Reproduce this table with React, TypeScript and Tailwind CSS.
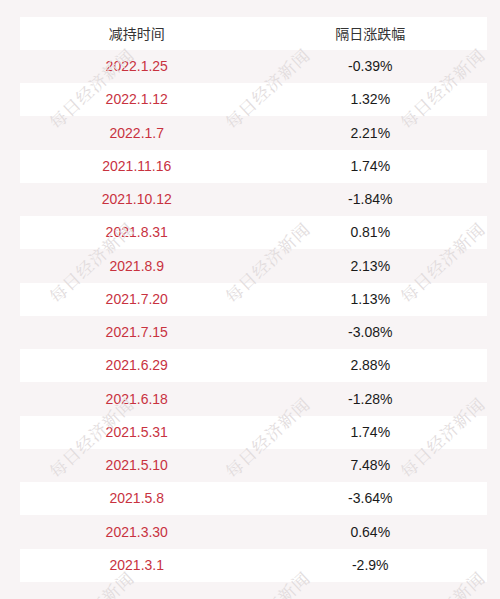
import React from "react";

const rows: [string, string][] = [
  ["2022.1.25", "-0.39%"],
  ["2022.1.12", "1.32%"],
  ["2022.1.7", "2.21%"],
  ["2021.11.16", "1.74%"],
  ["2021.10.12", "-1.84%"],
  ["2021.8.31", "0.81%"],
  ["2021.8.9", "2.13%"],
  ["2021.7.20", "1.13%"],
  ["2021.7.15", "-3.08%"],
  ["2021.6.29", "2.88%"],
  ["2021.6.18", "-1.28%"],
  ["2021.5.31", "1.74%"],
  ["2021.5.10", "7.48%"],
  ["2021.5.8", "-3.64%"],
  ["2021.3.30", "0.64%"],
  ["2021.3.1", "-2.9%"],
];

const marks: [number, number][] = [];
for (const y of [88, 262, 437, 611]) {
  for (const x of [91, 267, 442]) marks.push([x, y]);
}

export default function App() {
  return (
    <div
      className="relative w-[500px] h-[599px] overflow-hidden bg-[#f8f4f5] pt-[16.7px]"
      style={{ fontFamily: '"Liberation Sans", Arial, "Noto Sans CJK SC", sans-serif' }}
    >
      <div className="ml-[20px] w-[467px] flex flex-col">
        <div className="h-[33.3px] grid grid-cols-2 items-center bg-white text-[14px] text-[#333333]">
          <div className="text-center" style={{ fontFamily: '"Noto Sans CJK SC", sans-serif' }}>减持时间</div>
          <div className="text-center" style={{ fontFamily: '"Noto Sans CJK SC", sans-serif' }}>隔日涨跌幅</div>
        </div>
        {rows.map(([d, v], i) => (
          <div
            key={d}
            className={
              "h-[33.25px] grid grid-cols-2 items-center text-[14px] " +
              (i % 2 === 1 ? "bg-white" : "bg-transparent")
            }
          >
            <div className="text-center text-[#c8323f]">{d}</div>
            <div className="text-center text-[#1a1a1a]">{v}</div>
          </div>
        ))}
      </div>
      {marks.map(([x, y], i) => (
        <div
          key={i}
          className="absolute pointer-events-none whitespace-nowrap text-[17px] tracking-[1px] text-[#e2dcdd]"
          style={{
            left: x,
            top: y,
            transform: "translate(-50%, -50%) rotate(-43deg)",
            fontFamily: '"Noto Serif CJK SC", "Noto Sans CJK SC", serif',
          }}
        >
          每日经济新闻
        </div>
      ))}
    </div>
  );
}
